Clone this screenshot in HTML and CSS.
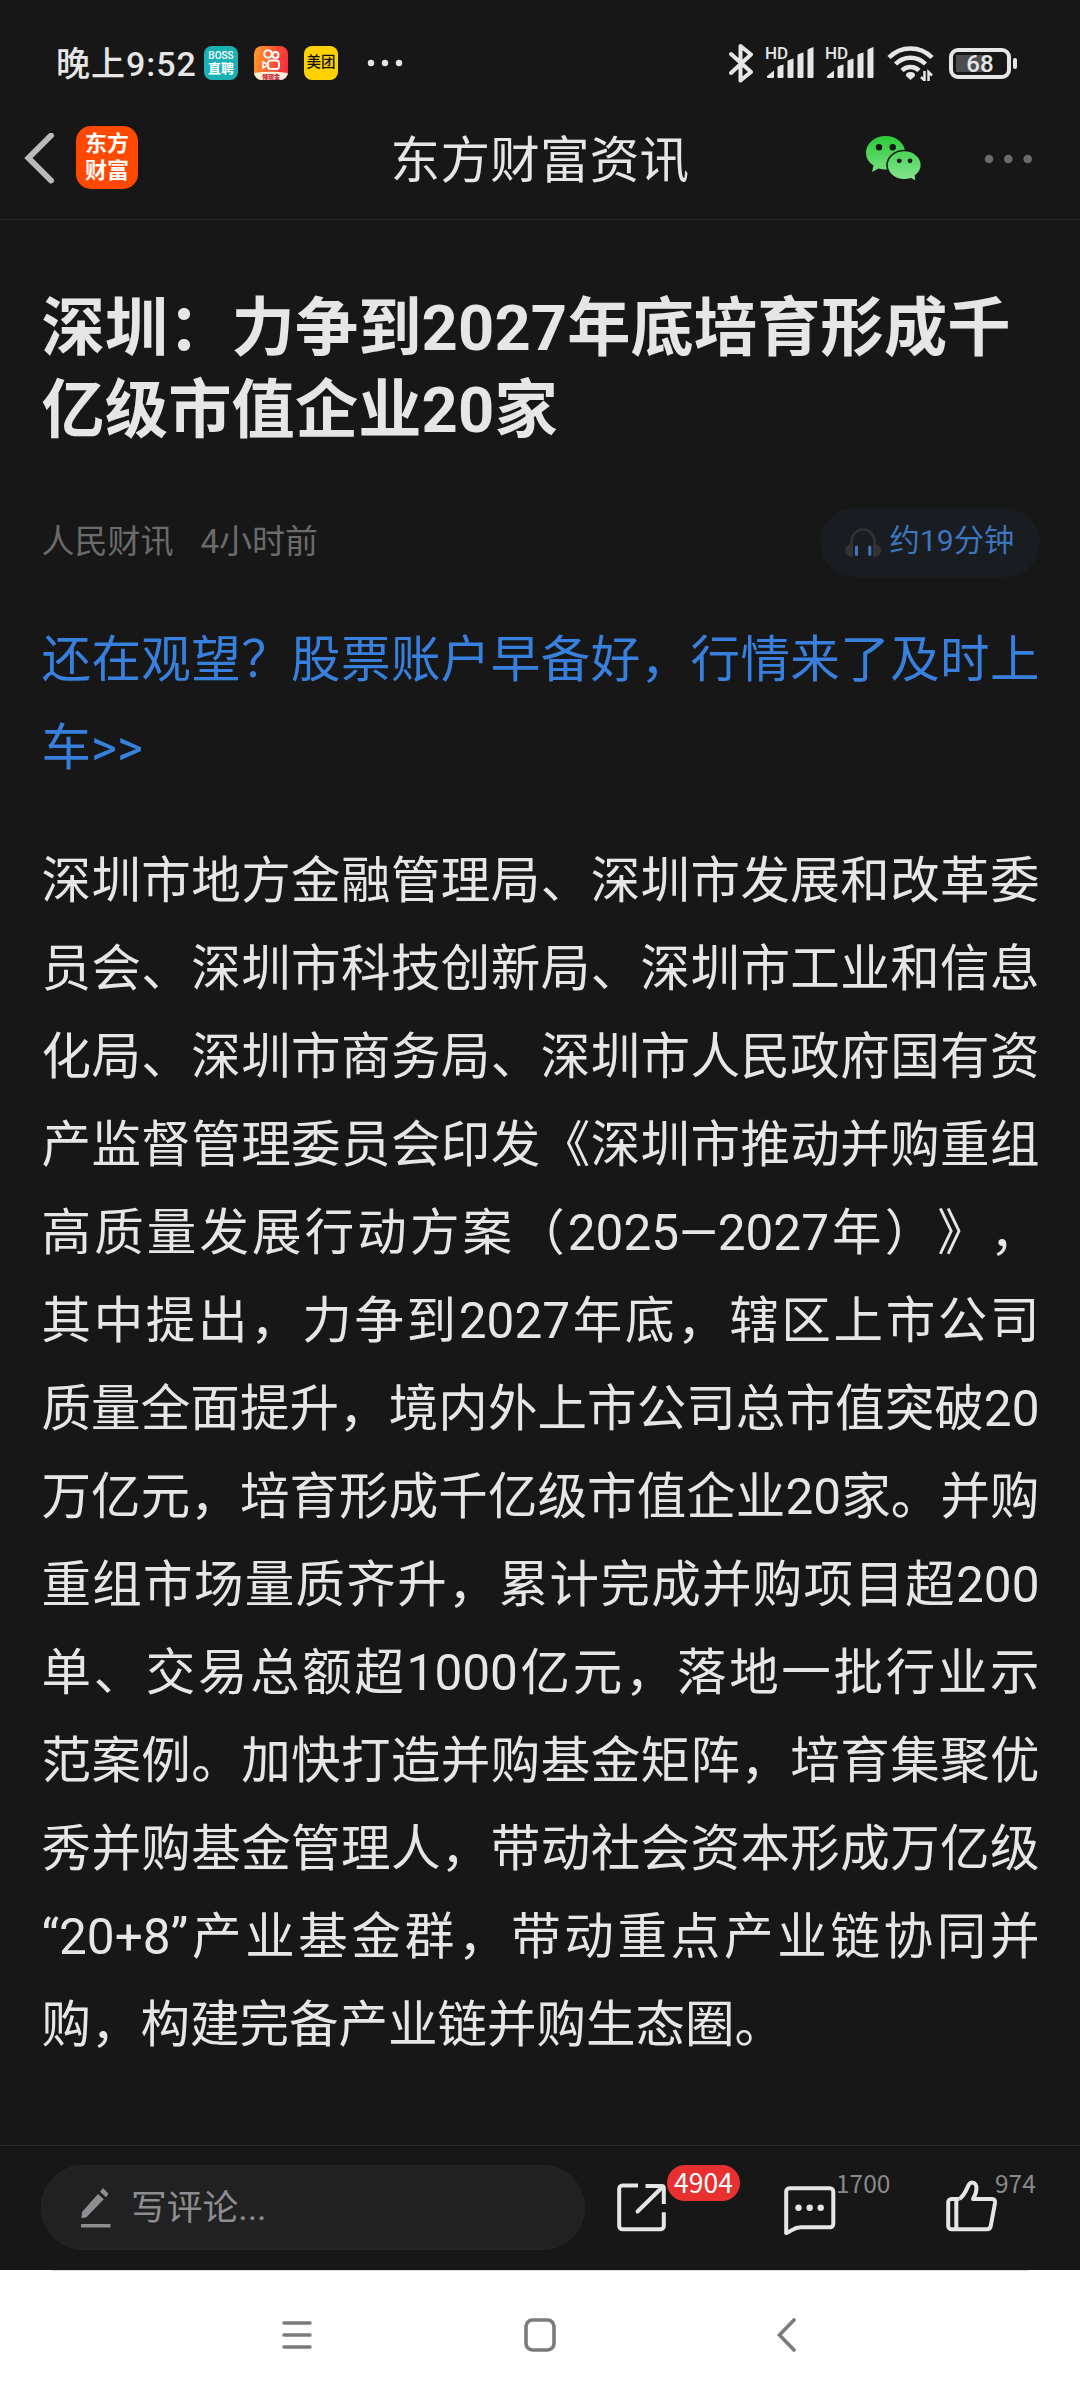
FILE: index.html
```
<!DOCTYPE html>
<html lang="zh-CN">

<head>
    <meta charset="UTF-8">
    <title>东方财富资讯</title>
    <meta name="viewport" content="width=device-width, initial-scale=1.0">
    <link rel="stylesheet" href="styles.css">
</head>

<body>
    <div class="status-bar">
        <span class="time">晚上9:52</span>
        <div class="app-icon boss"><span>BOSS</span><b>直聘</b></div>
        <div class="app-icon kuaishou">
            <svg width="34" height="34" viewBox="0 0 34 34" fill="none" stroke="#fff" stroke-width="2">
                <circle cx="14" cy="8" r="3.8" />
                <circle cx="21.5" cy="9" r="3" />
                <rect x="14" y="14.5" width="11" height="8.5" rx="2.8" />
                <path d="M14 18.5l-5-2.500v6z" stroke-width="1.5" />
                <path d="M0 27q16-2.500 34 0v7H0z" fill="#fff0dc" stroke="none" />
            </svg>
            <span>领现金</span>
        </div>
        <div class="app-icon meituan">美团</div>
        <svg class="more-apps" width="36" height="8" viewBox="0 0 36 8" fill="#e6e6e6">
            <circle cx="4" cy="4" r="3.200" />
            <circle cx="18" cy="4" r="3.200" />
            <circle cx="32" cy="4" r="3.200" />
        </svg>
        <div class="status-right">
            <svg width="24" height="40" viewBox="0 0 24 40" fill="none" stroke="#e6e6e6" stroke-width="4" stroke-linecap="round" stroke-linejoin="round">
                <path d="M2 11l20 18-10.500 8.500V3L22 11.500 2 30" />
            </svg>
            <div class="signal">
                <span>HD</span>
                <svg width="50" height="32" viewBox="0 0 50 32" fill="#e6e6e6">
                    <path d="M2 29l7-5.500V30q0 1-1 1H3q-1 0-1-1zM12.500 20q0-1 6-2.500V30q0 1-1 1h-4q-1 0-1-1zM22.500 14q0-1 6-2.500V30q0 1-1 1h-4q-1 0-1-1zM32.500 8q0-1 6-2.500V30q0 1-1 1h-4q-1 0-1-1zM42.500 3q0-1 6-3v30q0 1-1 1h-4q-1 0-1-1z" />
                </svg>
            </div>
            <div class="signal">
                <span>HD</span>
                <svg width="50" height="32" viewBox="0 0 50 32" fill="#e6e6e6">
                    <path d="M2 29l7-5.500V30q0 1-1 1H3q-1 0-1-1zM12.500 20q0-1 6-2.500V30q0 1-1 1h-4q-1 0-1-1zM22.500 14q0-1 6-2.500V30q0 1-1 1h-4q-1 0-1-1zM32.500 8q0-1 6-2.500V30q0 1-1 1h-4q-1 0-1-1zM42.500 3q0-1 6-3v30q0 1-1 1h-4q-1 0-1-1z" />
                </svg>
            </div>
            <svg class="wifi" width="47" height="36" viewBox="0 0 47 36" fill="none" stroke="#e6e6e6" stroke-width="4.500">
                <path d="M2 12.500a30 30 0 0 1 43 0M8.500 19a21 21 0 0 1 30 0M15 25.500a12 12 0 0 1 17 0" />
                <path d="M23.500 35l-4.500-4q-.5-4 4.500-4t4.500 4z" fill="#e6e6e6" stroke="none" />
                <path d="M37.500 26v9.500l-3.500-3.500M41.500 36V27l3.500 3.500" stroke-width="2.500" />
            </svg>
            <div class="battery"><span>68</span></div>
        </div>
    </div>

    <header class="header">
        <div class="header-side">
            <svg class="back" width="31" height="52" viewBox="0 0 31 52" fill="none" stroke="#bababa" stroke-width="6">
                <path d="M27 2.500L4.500 25 27 47.500" stroke-linecap="round" />
            </svg>
            <div class="logo">东方<br>财富</div>
        </div>
        <h1>东方财富资讯</h1>
        <div class="header-side header-right">
            <svg width="56" height="46" viewBox="0 0 56 46">
                <defs>
                    <linearGradient id="green" gradientUnits="userSpaceOnUse" x1="0" y1="0" x2="0" y2="46">
                        <stop offset="0" stop-color="#2bc936" />
                        <stop offset="1" stop-color="#8ae695" />
                    </linearGradient>
                </defs>
                <path fill="url(#green)" d="M19.600 0C30.500 0 39.200 7.500 39.200 16.800S30.500 33.600 19.600 33.600q-4 0-7-1L6 36l1.500-6.500Q0 25 0 16.800C0 7.500 8.700 0 19.600 0z" />
                <path fill="url(#green)" stroke="#171717" stroke-width="1.600" d="M38.200 14.500c9.800 0 17.200 6.500 17.200 14.800q0 6-6 10.500l1 6-5.500-3q-3 1-6.700 1c-9.500 0-17.200-6.500-17.200-14.500s7.700-14.800 17.200-14.800z" />
                <g fill="#171717">
                    <circle cx="13" cy="11.300" r="3.200" />
                    <circle cx="26.700" cy="11.300" r="3.200" />
                    <circle cx="33.300" cy="24.800" r="2.400" />
                    <circle cx="44" cy="24.800" r="2.400" />
                </g>
            </svg>
            <svg class="more" width="48" height="10" viewBox="0 0 48 10" fill="#6b6b6b">
                <circle cx="5" cy="5" r="4.300" />
                <circle cx="24.300" cy="5" r="4.300" />
                <circle cx="43.700" cy="5" r="4.300" />
            </svg>
        </div>
    </header>

    <main class="article">
        <h2>深圳：力争到2027年底培育形成千亿级市值企业20家</h2>
        <div class="meta">
            <span class="source">人民财讯</span>
            <span>4小时前</span>
            <div class="listen">
                <svg width="36" height="30" viewBox="0 0 36 30">
                    <path d="M6.500 18V13.500a11.500 12 0 0 1 23 0V18" fill="none" stroke="#333" stroke-width="2.500" />
                    <path d="M8 16v13q-8 0-8-6.500T8 16zM28 16v13q8 0 8-6.500T28 16z" fill="#333" />
                    <path d="M11.500 19v7.500M24.800 19v7.500" stroke="#3d76bd" stroke-width="3" stroke-linecap="round" />
                </svg>
                <span>约19分钟</span>
            </div>
        </div>
        <p class="promo">还在观望？股票账户早备好，行情来了及时上车&gt;&gt;</p>
        <p>深圳市地方金融管理局、深圳市发展和改革委员会、深圳市科技创新局、深圳市工业和信息化局、深圳市商务局、深圳市人民政府国有资产监督管理委员会印发《深圳市推动并购重组高质量发展行动方案（2025—2027年）》，其中提出，力争到2027年底，辖区上市公司质量全面提升，境内外上市公司总市值突破20万亿元，培育形成千亿级市值企业20家。并购重组市场量质齐升，累计完成并购项目超200单、交易总额超1000亿元，落地一批行业示范案例。加快打造并购基金矩阵，培育集聚优秀并购基金管理人，带动社会资本形成万亿级“20+8”产业基金群，带动重点产业链协同并购，构建完备产业链并购生态圈。</p>
    </main>

    <footer class="toolbar">
        <div class="comment-box">
            <svg width="30" height="40" viewBox="0 0 30 40" fill="#8e8d92">
                <path d="M17 6l5.800 5.300L5.400 29.300l-5 1L1 24zM22 0l5.500 5.700L25 9.300l-6-5.600zM0 36h29.500v3.600H0z" />
            </svg>
            <span>写评论...</span>
        </div>
        <div class="action share">
            <svg width="50" height="50" viewBox="0 0 50 50" fill="none" stroke="#e6e6e6" stroke-width="4">
                <path d="M21 2.500H5.500a3.300 3.300 0 0 0-3.300 3.300V43a3.300 3.300 0 0 0 3.300 3.300H43.500a3.300 3.300 0 0 0 3.300-3.300V29.300" />
                <path d="M28.500 3H44.500q2.300 0 2.300 2.300V21" />
                <path d="M20.500 28.500L45.500 4" stroke-linecap="round" />
            </svg>
            <span class="badge">4904</span>
        </div>
        <div class="action comments">
            <svg width="52" height="50" viewBox="0 0 52 50" fill="none" stroke="#e6e6e6" stroke-width="4" stroke-linejoin="round">
                <path d="M2.200 47V5.500a3.300 3.300 0 0 1 3.300-3.300H46a3.300 3.300 0 0 1 3.300 3.300V38a3.300 3.300 0 0 1-3.300 3.300H17C9.500 41.300 8 45 2.200 47z" />
                <g fill="#e6e6e6" stroke="none">
                    <circle cx="14.500" cy="21.700" r="3.200" />
                    <circle cx="25.700" cy="21.700" r="3.200" />
                    <circle cx="36.700" cy="21.700" r="3.200" />
                </g>
            </svg>
            <span class="count">1700</span>
        </div>
        <div class="action like">
            <svg width="52" height="53" viewBox="0 0 52 53" fill="none" stroke="#e6e6e6" stroke-width="4" stroke-linejoin="round">
                <path d="M13.500 19H5.500a3.300 3.300 0 0 0-3.300 3.300V46a3.300 3.300 0 0 0 3.300 3.300H41q3 0 3.700-3L49 23q.500-4-3-4H27c4-6 5.500-16.500-1-16.500-5 0-3.500 9-12.500 16.500" />
                <path d="M10.300 19v30" />
            </svg>
            <span class="count">974</span>
        </div>
    </footer>

    <nav class="nav-bar">
        <svg width="30" height="30" viewBox="0 0 30 30" stroke="#7b7b7b" stroke-width="3.500" stroke-linecap="round">
            <path d="M2 3h26M2 15h26M2 27h26" />
        </svg>
        <svg class="home" width="32" height="34" viewBox="0 0 32 34" fill="none" stroke="#7b7b7b" stroke-width="3.600">
            <rect x="2" y="2" width="28" height="30" rx="6.500" />
        </svg>
        <svg width="30" height="34" viewBox="0 0 30 34" fill="none" stroke="#7b7b7b" stroke-width="3.600" stroke-linecap="round">
            <path d="M17 2L2.500 17 17 32" />
        </svg>
    </nav>
</body>

</html>
```
FILE: styles.css
```
* {
    box-sizing: border-box;
}

body {
    margin: 0;
    width: 1080px;
    height: 2400px;
    display: flex;
    flex-direction: column;
    font-family: Roboto, "Noto Sans CJK SC", sans-serif;
    background: #171717;
    color: #e6e6e6;
    overflow: hidden;
}

svg {
    display: block;
    flex: none;
}

.status-bar {
    display: flex;
    align-items: center;
    height: 126px;
    padding: 0 63px 0 56px;
}

.time {
    width: 148px;
    padding-bottom: 3px;
    font-size: 34px;
    font-weight: 500;
    letter-spacing: 1px;
    white-space: nowrap;
}

.app-icon {
    position: relative;
    width: 34px;
    height: 34px;
    margin-right: 16px;
    border-radius: 8px;
    overflow: hidden;
    text-align: center;
}

.boss {
    background: #19b1b3;
    color: #ffffff;
    font-size: 10px;
    font-weight: 500;
    line-height: 10px;
    padding-top: 5px;
}

.boss span,
.boss b {
    display: block;
}

.boss b {
    font-size: 13px;
    line-height: 15px;
}

.kuaishou {
    background: linear-gradient(100deg, #ff9f2a, #ff5a30 50%, #fb2340);
}

.kuaishou span {
    position: absolute;
    left: 8px;
    bottom: 0;
    font-size: 6px;
    line-height: 7px;
    font-weight: 900;
    color: #d3202c;
}

.meituan {
    background: #ffd100;
    color: #111111;
    font-size: 14.5px;
    font-weight: 500;
    line-height: 34px;
    white-space: nowrap;
}

.more-apps {
    margin-left: 13px;
}

.status-right {
    display: flex;
    align-items: center;
    margin-left: auto;
}

.signal {
    position: relative;
    width: 50px;
    margin-left: 10px;
}

.signal:first-of-type {
    margin-left: 12px;
}

.signal span {
    position: absolute;
    left: 0;
    top: -2px;
    font-size: 17px;
    line-height: 17px;
    font-weight: 500;
}

.wifi {
    margin: 0 15px 0 12px;
}

.battery {
    position: relative;
    width: 62px;
    height: 31px;
    padding: 3px 3px;
    border: 4px solid #e6e6e6;
    border-radius: 9px;
    margin-right: 6px;
    text-align: center;
    background: linear-gradient(#4d4d4d, #4d4d4d) 3px 3px / 30px 17px no-repeat;
}

.battery::after {
    content: "";
    position: absolute;
    right: -10px;
    top: 6px;
    width: 4px;
    height: 11px;
    border-radius: 2px;
    background: #e6e6e6;
}

.battery span {
    display: block;
    font-size: 24px;
    line-height: 18px;
    font-weight: 500;
}

.header {
    display: flex;
    align-items: center;
    justify-content: space-between;
    height: 94px;
    padding: 0 48px 28px 24px;
    border-bottom: 1px solid #292929;
}

.header-side {
    display: flex;
    align-items: center;
    width: 190px;
}

.logo {
    width: 62px;
    height: 63px;
    margin: 0 0 2px 21px;
    padding-top: 4px;
    border-radius: 15px;
    background: #ff4800;
    color: #ffffff;
    font-size: 22px;
    font-weight: 700;
    line-height: 27px;
    text-align: center;
}

.header h1 {
    margin: 0;
    padding-top: 4px;
    font-size: 49.5px;
    font-weight: 400;
    line-height: 66px;
    letter-spacing: 0.3px;
}

.header-right {
    width: 166px;
}

.header-right .more {
    margin-left: auto;
}

.article {
    flex: 1;
    padding: 67px 40.5px 0 41.5px;
}

.article h2 {
    margin: 0;
    font-size: 63.25px;
    font-weight: 700;
    line-height: 82px;
    letter-spacing: 0.1px;
}

.meta {
    display: flex;
    align-items: center;
    margin: 57px 0 39px;
    font-size: 33px;
    line-height: 40px;
    color: #6b6b6b;
}

.meta span {
    padding-bottom: 2px;
}

.source {
    margin-right: 27px;
}

.listen {
    display: flex;
    align-items: center;
    width: 220px;
    height: 69px;
    margin-left: auto;
    padding-left: 25px;
    border-radius: 35px;
    background: #191c20;
    color: #3d76bd;
    font-size: 30.25px;
}

.listen span {
    margin-left: 9px;
    padding-bottom: 4px;
}

.article p {
    margin: 0;
    font-size: 49.5px;
    line-height: 88px;
    text-align: justify;
    text-spacing-trim: space-all;
}

.article .promo {
    margin-bottom: 45px;
    color: #3880dd;
}

.toolbar {
    display: flex;
    align-items: flex-start;
    height: 125px;
    padding: 19px 0 0 41px;
    border-top: 1px solid #292929;
}

.comment-box {
    display: flex;
    align-items: center;
    width: 544px;
    height: 85px;
    padding-left: 39px;
    border: 1px solid #272727;
    border-radius: 43px;
    background: #212121;
    color: #8e8d92;
    font-size: 35.75px;
}

.comment-box span {
    margin-left: 20px;
    padding-bottom: 6px;
}

.action {
    position: relative;
}

.share {
    margin: 18px 0 0 32px;
}

.comments {
    margin: 21px 0 0 117px;
}

.like {
    margin: 15px 0 0 110px;
}

.badge {
    position: absolute;
    left: 50px;
    top: -18px;
    width: 73px;
    height: 36px;
    border-radius: 18px;
    background: #e93030;
    color: #ffffff;
    font-family: "Noto Sans CJK SC", sans-serif;
    font-size: 26.5px;
    line-height: 33px;
    text-align: center;
}

.count {
    position: absolute;
    left: 52px;
    top: -21px;
    font-family: "Noto Sans CJK SC", sans-serif;
    font-size: 24.5px;
    line-height: 36px;
    color: #8a8a8e;
}

.like .count {
    left: 49px;
    top: -15px;
}

.nav-bar {
    display: flex;
    align-items: center;
    justify-content: space-between;
    height: 130px;
    padding: 0 273px 0 282px;
    background: linear-gradient(#dddddd, #dddddd) 52px 0 / 976px 1px no-repeat #ffffff;
}

.home {
    margin-right: 9px;
}
```
